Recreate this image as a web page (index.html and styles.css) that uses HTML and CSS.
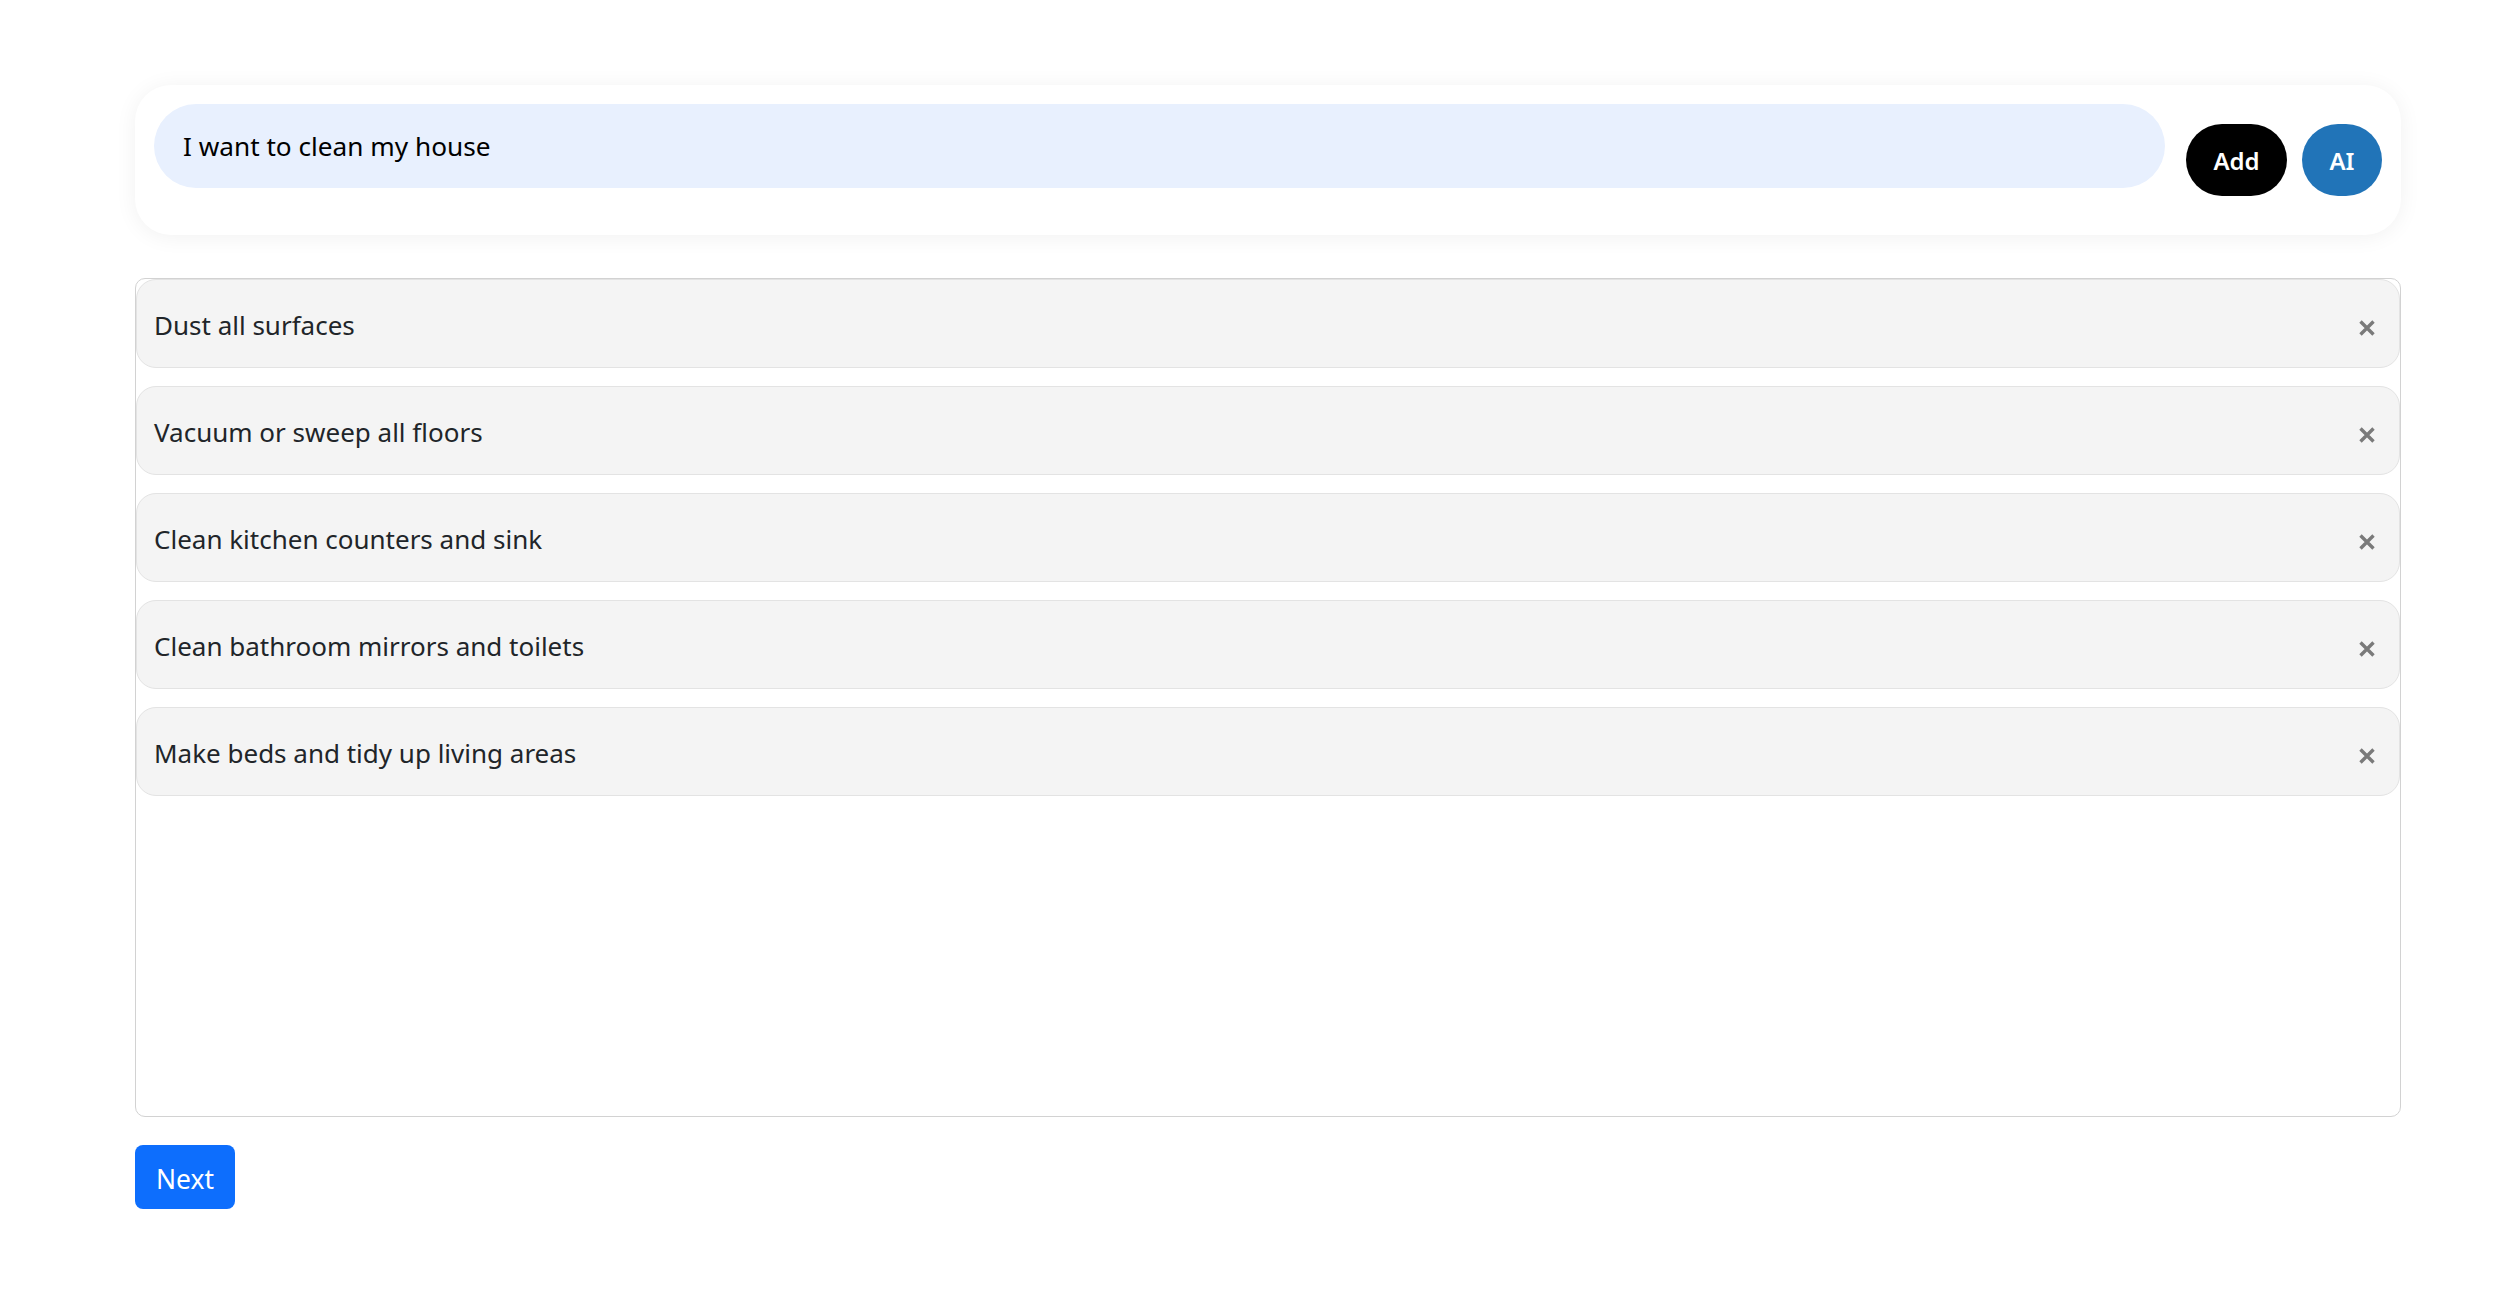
FILE: index.html
```html
<!DOCTYPE html>
<html lang="en">
<head>
<meta charset="utf-8">
<title>Tasks</title>
<link rel="stylesheet" href="styles.css">
</head>
<body>
<main class="page">
  <section class="composer">
    <div class="composer-field">
      <input class="composer-input" type="text" value="I want to clean my house">
    </div>
    <button class="btn-add" type="button">Add</button>
    <button class="btn-ai" type="button">AI</button>
  </section>

  <ul class="task-list">
    <li class="task"><span class="task-text">Dust all surfaces</span><button class="task-remove" type="button" aria-label="Remove"><svg viewBox="0 0 18 18" width="18" height="18"><path d="M2.5 2.5 L15.5 15.5 M15.5 2.5 L2.5 15.5" /></svg></button></li>
    <li class="task"><span class="task-text">Vacuum or sweep all floors</span><button class="task-remove" type="button" aria-label="Remove"><svg viewBox="0 0 18 18" width="18" height="18"><path d="M2.5 2.5 L15.5 15.5 M15.5 2.5 L2.5 15.5" /></svg></button></li>
    <li class="task"><span class="task-text">Clean kitchen counters and sink</span><button class="task-remove" type="button" aria-label="Remove"><svg viewBox="0 0 18 18" width="18" height="18"><path d="M2.5 2.5 L15.5 15.5 M15.5 2.5 L2.5 15.5" /></svg></button></li>
    <li class="task"><span class="task-text">Clean bathroom mirrors and toilets</span><button class="task-remove" type="button" aria-label="Remove"><svg viewBox="0 0 18 18" width="18" height="18"><path d="M2.5 2.5 L15.5 15.5 M15.5 2.5 L2.5 15.5" /></svg></button></li>
    <li class="task"><span class="task-text">Make beds and tidy up living areas</span><button class="task-remove" type="button" aria-label="Remove"><svg viewBox="0 0 18 18" width="18" height="18"><path d="M2.5 2.5 L15.5 15.5 M15.5 2.5 L2.5 15.5" /></svg></button></li>
  </ul>

  <button class="btn-next" type="button">Next</button>
</main>
</body>
</html>
```

FILE: styles.css
```css
* { box-sizing: border-box; }

html, body {
  margin: 0;
  padding: 0;
  background: #ffffff;
  font-family: "Noto Sans", "Open Sans", sans-serif;
  color: #212529;
}

.page {
  width: 2266px;
  margin-left: 135px;
  padding-top: 85px;
}

.composer {
  display: flex;
  align-items: center;
  gap: 15px;
  padding: 19px;
  background: #ffffff;
  border-radius: 36px;
  box-shadow: 0 2px 22px rgba(0, 0, 0, 0.06);
}

.composer-field {
  flex: 1;
  padding-bottom: 28px;
  margin-right: 6px;
}

.composer-input {
  display: block;
  width: 100%;
  height: 84px;
  border: none;
  outline: none;
  border-radius: 42px;
  background: #e8f0fe;
  padding: 0 29px;
  font-family: "Noto Sans", "Open Sans", sans-serif;
  font-size: 26.2px;
  color: #000000;
}

.btn-add,
.btn-ai {
  height: 72px;
  border: none;
  border-radius: 36px;
  color: #ffffff;
  font-family: "Noto Sans", "Open Sans", sans-serif;
  font-size: 24px;
  font-weight: 600;
  padding: 0;
  cursor: pointer;
}

.btn-add {
  width: 101px;
  background: #000000;
}

.btn-ai {
  width: 80px;
  background: #2174b8;
}

.task-list {
  list-style: none;
  margin: 43px 0 0;
  padding: 0;
  height: 839px;
  border: 1px solid #d2d2d2;
  border-radius: 10px;
}

.task {
  display: flex;
  align-items: center;
  justify-content: space-between;
  height: 89px;
  margin-bottom: 18px;
  padding: 0 23px 0 17px;
  background: #f4f4f4;
  border: 1px solid #e3e3e3;
  border-radius: 20px;
}

.task-text {
  font-size: 26px;
  color: #212529;
  padding-top: 3px;
}

.task-remove {
  display: flex;
  align-items: center;
  justify-content: center;
  width: 18px;
  height: 18px;
  padding: 0;
  margin-top: 8px;
  border: none;
  background: transparent;
  cursor: pointer;
}

.task-remove svg path {
  stroke: #7a7a7a;
  stroke-width: 3.4;
  fill: none;
}

.btn-next {
  display: block;
  margin-top: 28px;
  width: 100px;
  height: 64px;
  border: none;
  border-radius: 8px;
  background: #0d6efd;
  color: #ffffff;
  font-family: "Noto Sans", "Open Sans", sans-serif;
  font-size: 26.4px;
  padding: 3px 0 0;
  cursor: pointer;
}
```
